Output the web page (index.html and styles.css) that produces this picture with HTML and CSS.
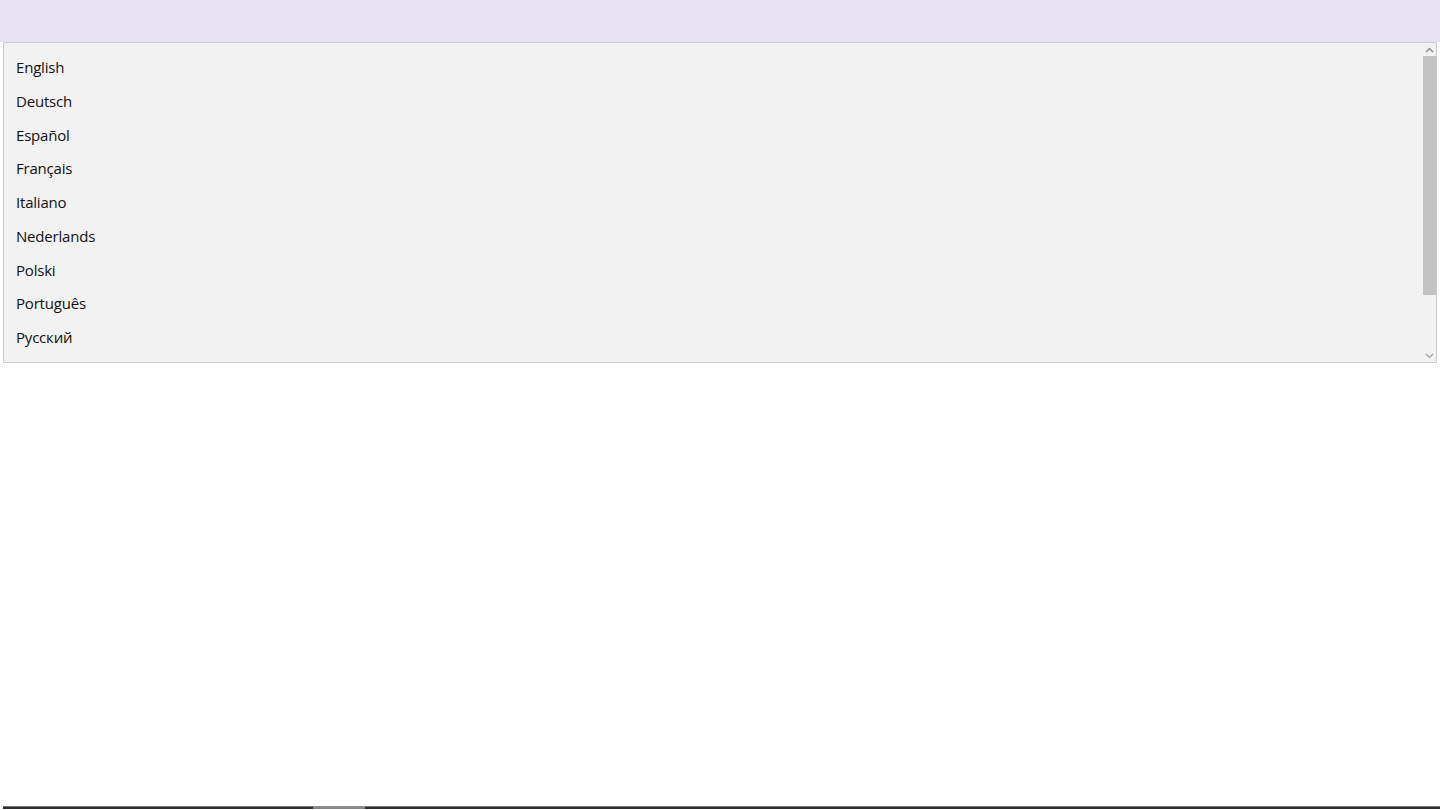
FILE: index.html
```html
<!DOCTYPE html>
<html>
<head>
<meta charset="utf-8">
<link rel="stylesheet" href="styles.css">
</head>
<body>
<div class="app">
  <header class="topbar"></header>
  <div class="listbox">
    <ul class="items">
      <li>English</li>
      <li>Deutsch</li>
      <li>Español</li>
      <li>Français</li>
      <li>Italiano</li>
      <li>Nederlands</li>
      <li>Polski</li>
      <li>Português</li>
      <li>Русский</li>
    </ul>
    <div class="scrollbar">
      <svg class="arrow" width="9" height="6" viewBox="0 0 9 6"><path d="M1 5 L4.5 1.5 L8 5" fill="none" stroke="#8a8a8a" stroke-width="1.4"/></svg>
      <div class="track"><div class="thumb"></div></div>
      <svg class="arrow" width="9" height="6" viewBox="0 0 9 6"><path d="M1 1 L4.5 4.5 L8 1" fill="none" stroke="#a0a0a0" stroke-width="1.2"/></svg>
    </div>
  </div>
  <div class="spacer"></div>
  <div class="bottomline"><div class="seg dark1"></div><div class="seg light"></div><div class="seg dark2"></div></div>
</div>
</body>
</html>
```
FILE: styles.css
```css
* { box-sizing: border-box; }
html, body { margin: 0; padding: 0; background: #ffffff; }
body {
  font-family: "Open Sans", "Noto Sans", "Liberation Sans", sans-serif;
  width: 1440px;
  height: 810px;
  overflow: hidden;
}
.app { display: flex; flex-direction: column; height: 810px; }
.topbar { height: 42px; background: #e8e1f2; flex: none; }
.listbox {
  margin: 0 3px;
  height: 321px;
  flex: none;
  display: flex;
  background: #f2f2f2;
  border: 1px solid #cccccc;
}
.items {
  list-style: none;
  margin: 0;
  padding: 8px 0 0 12px;
  flex: 1;
}
.items li {
  height: 33.75px;
  line-height: 33.75px;
  font-size: 15px;
  color: #111111;
  letter-spacing: -0.2px;
}
.scrollbar {
  width: 14px;
  display: flex;
  flex-direction: column;
  align-items: center;
  padding: 3px 0 3px;
}
.arrow { flex: none; display: block; }
.scrollbar .arrow:first-child { margin-top: 1px; }
.track { flex: 1; width: 13px; padding-top: 3px; padding-bottom: 58px; display: flex; }
.thumb { flex: 1; background: #c2c2c2; }
.spacer { flex: 1; }
.bottomline {
  margin: 0 0 1px 3px;
  height: 3px;
  display: flex;
  flex: none;
}
.seg { height: 3px; }
.dark1 { width: 310px; background: #2e2e2e; border-top: 1px solid #777; }
.light { width: 52px; background: #8c8c8c; }
.dark2 { flex: 1; background: #2e2e2e; border-top: 1px solid #777; }
```
